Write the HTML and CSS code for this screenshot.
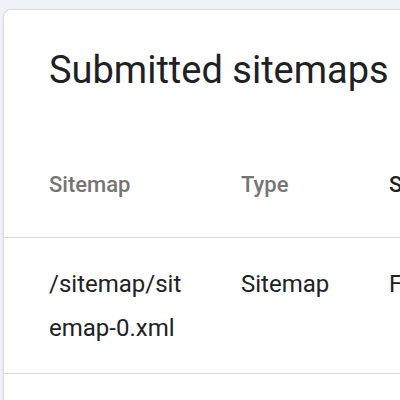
FILE: index.html
```html
<!DOCTYPE html>
<html>
<head>
<meta charset="utf-8">
<link rel="stylesheet" href="styles.css">
</head>
<body>
<div class="card">
  <h1 class="title">Submitted sitemaps</h1>
  <div class="table">
    <div class="row head">
      <div class="cell c1">Sitemap</div>
      <div class="cell c2">Type</div>
      <div class="cell c3 sorted">Submitted</div>
    </div>
    <div class="row body">
      <div class="cell c1">/sitemap/sitemap-0.xml</div>
      <div class="cell c2">Sitemap</div>
      <div class="cell c3">Feb 12, 2024</div>
    </div>
    <div class="row body">
      <div class="cell c1"></div>
    </div>
  </div>
</div>
</body>
</html>
```
FILE: styles.css
```css
html, body {
  margin: 0;
  padding: 0;
  width: 400px;
  height: 400px;
  overflow: hidden;
  background: #f0f2f7;
  font-family: Roboto, "Liberation Sans", sans-serif;
}
.card {
  margin: 9px 0 0 3px;
  width: 700px;
  background: #fff;
  border: 1px solid #dadce0;
  border-right: none;
  border-radius: 8px 0 0 0;
  box-shadow: 0 1px 2px rgba(60,64,67,0.15);
  padding-top: 36px;
}
.title {
  margin: 0 0 39px 0;
  padding-left: 45px;
  font-size: 38px;
  line-height: 48px;
  font-weight: 400;
  color: #202124;
}
.row {
  display: flex;
  border-bottom: 1px solid #dadce0;
  padding-left: 45px;
}
.cell {
  flex: none;
}
.c1 { width: 140px; padding-right: 52px; word-break: break-all; }
.c2 { width: 148px; }
.c3 { width: 200px; }
.head {
  padding-top: 40px;
  padding-bottom: 40px;
}
.head .cell {
  font-size: 22px;
  line-height: 24px;
  font-weight: 500;
  color: #757575;
}
.head .sorted { color: #202124; }
.body {
  padding-top: 24px;
  padding-bottom: 23px;
}
.body .cell {
  font-size: 24px;
  line-height: 44px;
  color: #202124;
}
```
